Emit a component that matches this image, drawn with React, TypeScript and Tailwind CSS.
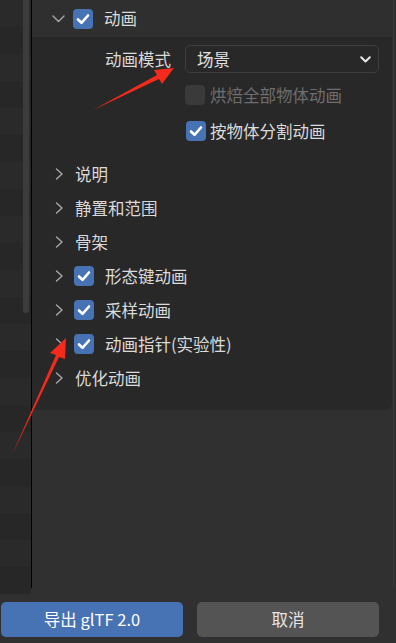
import React from "react";

const font = { fontFamily: '"Noto Sans CJK SC", "Noto Sans", sans-serif' };

const Check = ({ disabled = false }: { disabled?: boolean }) =>
  disabled ? (
    <span className="block h-[20px] w-[20px] shrink-0 rounded-[4px] bg-[#3a3a3a]" />
  ) : (
    <span className="flex h-[20px] w-[20px] shrink-0 items-center justify-center rounded-[4px] bg-[#4772b3]">
      <svg width="14" height="12" viewBox="0 0 14 12" fill="none">
        <path d="M2 6.5 L5.5 9.8 L12 2.5" stroke="#fff" strokeWidth="2.6" strokeLinecap="round" strokeLinejoin="round" />
      </svg>
    </span>
  );

const ChevronRight = () => (
  <svg width="9" height="12" viewBox="0 0 9 12" fill="none" className="shrink-0">
    <path d="M1.5 1 L7 6 L1.5 11" stroke="#a8a8a8" strokeWidth="1.4" strokeLinecap="round" strokeLinejoin="round" />
  </svg>
);

const rows: { label: string; check?: boolean }[] = [
  { label: "说明" },
  { label: "静置和范围" },
  { label: "骨架" },
  { label: "形态键动画", check: true },
  { label: "采样动画", check: true },
  { label: "动画指针(实验性)", check: true },
  { label: "优化动画" },
];

export default function App() {
  return (
    <div className="relative flex h-[643px] w-[396px] flex-col overflow-hidden bg-[#303030] text-[16.5px] text-[#dadada]" style={font}>
      <div className="flex h-[588px] shrink-0">
        {/* left list strip */}
        <div className="relative w-[32px] shrink-0 border-r border-black">
          {Array.from({ length: 22 }).map((_, i) => (
            <div key={i} className={i % 2 === 0 ? "h-[27px] bg-[#2a2a2a]" : "h-[27px] bg-[#272727]"} />
          ))}
          <div className="absolute left-[23px] top-0 h-[313px] w-[6px] rounded-b-full bg-[#3c3c3c]" />
        </div>

        <div className="flex flex-1">
          {/* animation panel */}
          <div className="h-[410px] w-[360px] shrink-0 overflow-hidden rounded-br-[6px] bg-[#282828]">
            <div className="flex h-[37px] items-center bg-[#2f2f2f] pl-[20px]">
              <svg width="13" height="8" viewBox="0 0 13 8" fill="none">
                <path d="M1 1 L6.5 6.5 L12 1" stroke="#a8a8a8" strokeWidth="1.4" strokeLinecap="round" strokeLinejoin="round" />
              </svg>
              <span className="ml-[8px]"><Check /></span>
              <span className="ml-[11px] leading-none">动画</span>
            </div>

            <div className="pt-[4px]">
              <div className="flex h-[36px] items-center">
                <span className="w-[139px] pr-[0px] text-right leading-none">动画模式</span>
                <div className="ml-[14px] flex h-[28px] w-[194px] items-center justify-between rounded-[5px] border border-[#3e3e3e] bg-[#282828] pl-[11px] pr-[7px]">
                  <span className="leading-none text-[#e2e2e2]">场景</span>
                  <svg width="11" height="7" viewBox="0 0 11 7" fill="none">
                    <path d="M1.2 1.2 L5.5 5.5 L9.8 1.2" stroke="#e6e6e6" strokeWidth="2" strokeLinecap="round" strokeLinejoin="round" />
                  </svg>
                </div>
              </div>
              <div className="flex h-[36px] items-center pl-[153px]">
                <Check disabled />
                <span className="ml-[5px] leading-none text-[#6e6e6e]">烘焙全部物体动画</span>
              </div>
              <div className="flex h-[36px] items-center pl-[154px]">
                <Check />
                <span className="ml-[4px] leading-none">按物体分割动画</span>
              </div>

              <div className="mt-[8px]">
                {rows.map((r) => (
                  <div key={r.label} className="flex h-[34px] items-center pl-[23px]">
                    <ChevronRight />
                    {r.check ? (
                      <>
                        <span className="ml-[10px]"><Check /></span>
                        <span className="ml-[11px] leading-none">{r.label}</span>
                      </>
                    ) : (
                      <span className="ml-[11px] leading-none">{r.label}</span>
                    )}
                  </div>
                ))}
              </div>
            </div>
          </div>

          {/* right edge ruler */}
          <div className="ml-[1px] w-[1px] bg-[#3a3a3a]" />
        </div>
      </div>

      {/* buttons */}
      <div className="flex gap-[14px] pl-[1px] pt-[14px]">
        <button className="flex h-[35px] w-[182px] items-center justify-center rounded-[5px] bg-[#4772b3] text-[16.5px] text-white" style={font}>
          导出 glTF 2.0
        </button>
        <button className="flex h-[35px] w-[182px] items-center justify-center rounded-[5px] bg-[#545454] text-[16.5px] text-[#e6e6e6]" style={font}>
          取消
        </button>
      </div>

      {/* red annotation arrows */}
      <svg className="pointer-events-none absolute left-0 top-0" width="396" height="643" viewBox="0 0 396 643">
        <polygon points="93,110 157,75 154,70 174,68 162,84 159,79" fill="#f42a1c" />
        <polygon points="12,455 56,355 50,353 66,338 65,359 59,357" fill="#f42a1c" />
      </svg>
    </div>
  );
}
